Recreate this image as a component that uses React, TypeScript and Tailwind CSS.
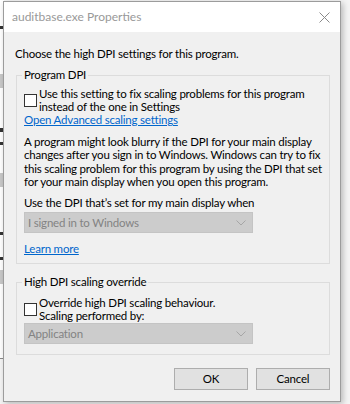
import React from "react";

const font = { fontFamily: 'Lato, "Segoe UI", sans-serif' };

function Chevron() {
  return (
    <svg width="10" height="6" viewBox="0 0 10 6" className="block">
      <path d="M0.5 0.5 L5 5 L9.5 0.5" fill="none" stroke="#a6a6a6" strokeWidth="1" />
    </svg>
  );
}

function Select({ label }: { label: string }) {
  return (
    <div className="flex h-[21px] w-[229px] items-center justify-between border border-[#c4c4c4] bg-[#cccccc] pl-[3px] pr-[6px] text-[#838383]">
      <span>{label}</span>
      <Chevron />
    </div>
  );
}

function Checkbox() {
  return <div className="h-[13px] w-[13px] shrink-0 border border-[#333333] bg-white" />;
}

function GroupLabel({ children }: { children: React.ReactNode }) {
  return (
    <div className="-ml-[2px] -mt-[9px] self-start bg-[#f0f0f0] px-[2px] leading-[16px]">{children}</div>
  );
}

export default function App() {
  return (
    <div
      className="relative h-[404px] w-[350px] overflow-hidden whitespace-nowrap bg-[#f4f4f4] text-[11.5px] tracking-[-0.2px] text-black antialiased"
      style={font}
    >
      {/* background window fragments at the left */}
      <div className="absolute left-0 top-0 h-[358px] w-[4px] bg-white">
        <div className="mt-[26px] h-[3px] w-[3px] bg-[#333]" />
        <div className="mt-[45px] h-[14px] w-[3px] bg-[#c8c8c8]" />
        <div className="mt-[40px] h-[4px] w-[3px] bg-[#333]" />
        <div className="mt-[10px] h-[3px] w-[3px] bg-[#333]" />
        <div className="mt-[28px] h-[14px] w-[3px] bg-[#c8c8c8]" />
        <div className="mt-[45px] h-[3px] w-[3px] bg-[#333]" />
        <div className="mt-[22px] h-[3px] w-[3px] bg-[#333]" />
        <div className="mt-[10px] h-[14px] w-[3px] bg-[#c8c8c8]" />
      </div>
      <div className="absolute left-0 top-[358px] h-[1px] w-[4px] bg-[#8a8a8a]" />

      {/* dialog */}
      <div className="absolute left-[3px] top-[1px] flex h-[401px] w-[338px] flex-col border border-[#9c9c9c] bg-[#f0f0f0] shadow-[2px_2px_6px_rgba(0,0,0,0.25)]">
        {/* title bar */}
        <div className="flex h-[30px] shrink-0 items-center justify-between bg-white pl-[8px] pr-[10px]">
          <span className="text-[12px] tracking-normal text-[#999999]">auditbase.exe Properties</span>
          <svg width="11" height="11" viewBox="0 0 11 11" className="block">
            <path d="M0.5 0.5 L10.5 10.5 M10.5 0.5 L0.5 10.5" stroke="#8a8a8a" strokeWidth="1" />
          </svg>
        </div>

        {/* body */}
        <div className="flex flex-col pl-[11px] pr-[10px]">
          <div className="mt-[14px] leading-[16px]">Choose the high DPI settings for this program.</div>

          <div className="ml-px mt-[13px] flex w-[314px] flex-col border border-[#dcdcdc] px-[7px] pb-[8px]">
            <GroupLabel>Program DPI</GroupLabel>
            <div className="mt-[4px] flex items-center gap-[2px] leading-[13px]">
              <Checkbox />
              <div>
                Use this setting to fix scaling problems for this program
                <br />
                instead of the one in Settings
              </div>
            </div>
            <div className="self-start leading-[13px] text-[#0066cc] underline">Open Advanced scaling settings</div>
            <p className="mt-[9px] leading-[13.3px]">
              A program might look blurry if the DPI for your main display
              <br />
              changes after you sign in to Windows. Windows can try to fix
              <br />
              this scaling problem for this program by using the DPI that set
              <br />
              for your main display when you open this program.
            </p>
            <div className="mt-[8px] leading-[13px]">Use the DPI that’s set for my main display when</div>
            <div className="mt-[3px]">
              <Select label="I signed in to Windows" />
            </div>
            <div className="mt-[9px] self-start leading-[13px] text-[#0066cc] underline">Learn more</div>
          </div>

          <div className="ml-px mt-[18px] flex w-[314px] flex-col border border-[#dcdcdc] px-[7px] pb-[10px]">
            <GroupLabel>High DPI scaling override</GroupLabel>
            <div className="mt-[6px] flex items-center gap-[2px] leading-[13px]">
              <Checkbox />
              <div>
                Override high DPI scaling behaviour.
                <br />
                Scaling performed by:
              </div>
            </div>
            <div className="mt-[1px]">
              <Select label="Application" />
            </div>
          </div>

          <div className="mt-[13px] flex w-[315px] justify-end gap-[8px]">
            <button className="h-[22px] w-[74px] border border-[#adadad] bg-[#e1e1e1] leading-[20px]">OK</button>
            <button className="h-[22px] w-[74px] border border-[#adadad] bg-[#e1e1e1] leading-[20px]">Cancel</button>
          </div>
        </div>
      </div>
    </div>
  );
}
